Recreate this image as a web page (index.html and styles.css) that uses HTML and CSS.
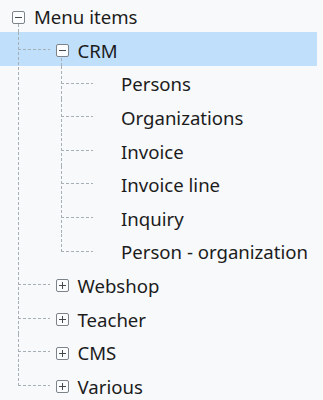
FILE: index.html
```html
<!DOCTYPE html>
<html lang="en">

<head>
    <meta charset="UTF-8">
    <title>Menu items</title>
    <link rel="stylesheet" href="styles.css">
</head>

<body>
    <div class="tree">
        <ul>
            <li class="node open l0">
                <div class="row"><span class="toggle"></span><span class="label">Menu items</span></div>
                <ul>
                    <li class="node open l1">
                        <div class="row selected"><span class="toggle"></span><span class="label">CRM</span></div>
                        <ul>
                            <li class="leaf l2"><div class="row"><span class="spacer"></span><span class="label">Persons</span></div></li>
                            <li class="leaf l2"><div class="row"><span class="spacer"></span><span class="label">Organizations</span></div></li>
                            <li class="leaf l2"><div class="row"><span class="spacer"></span><span class="label">Invoice</span></div></li>
                            <li class="leaf l2"><div class="row"><span class="spacer"></span><span class="label">Invoice line</span></div></li>
                            <li class="leaf l2"><div class="row"><span class="spacer"></span><span class="label">Inquiry</span></div></li>
                            <li class="leaf l2"><div class="row"><span class="spacer"></span><span class="label">Person - organization</span></div></li>
                        </ul>
                    </li>
                    <li class="node l1"><div class="row"><span class="toggle plus"></span><span class="label">Webshop</span></div></li>
                    <li class="node l1"><div class="row"><span class="toggle plus"></span><span class="label">Teacher</span></div></li>
                    <li class="node l1"><div class="row"><span class="toggle plus"></span><span class="label">CMS</span></div></li>
                    <li class="node l1"><div class="row"><span class="toggle plus"></span><span class="label">Various</span></div></li>
                </ul>
            </li>
        </ul>
    </div>
</body>

</html>
```

FILE: styles.css
```css
body {
    margin: 0;
    background-color: #f7f9fb;
    font-family: "Noto Sans", "Open Sans", sans-serif;
    font-size: 18.6px;
    color: #1c1c1c;
}
ul {
    list-style: none;
    margin: 0;
    padding: 0;
}
.tree {
    width: 317px;
    margin-top: -1.6px;
}
.tree li {
    position: relative;
}
.l0 { --lvl: 0; --x: 18px; }
.l1 { --lvl: 1; --x: 61px; }
.l2 { --lvl: 2; }

.row {
    position: relative;
    display: flex;
    align-items: center;
    height: 33.6px;
    box-sizing: border-box;
    padding-top: 3px;
    padding-left: calc(12px + var(--lvl) * 43.5px);
}
.row.selected {
    background-color: #c0dffb;
}
/* tree lines */
.l1::before,
.l2::before {
    content: "";
    position: absolute;
    z-index: 1;
    top: 17px;
    width: 32px;
    height: 1px;
    background: repeating-linear-gradient(to right, #a6aeb6 0 3px, transparent 3px 5px);
}
.l1::before { left: 18px; }
.l2::before { left: 61px; }
.l1::after,
.l2::after {
    content: "";
    position: absolute;
    z-index: 1;
    top: 0;
    bottom: 0;
    width: 1px;
    background: repeating-linear-gradient(to bottom, #a6aeb6 0 3px, transparent 3px 5px);
}
.l1::after { left: 18px; }
.l2::after { left: 61px; }
.l1:last-child::after,
.l2:last-child::after {
    bottom: auto;
    height: 17px;
}
.open > .row::after {
    content: "";
    position: absolute;
    z-index: 1;
    left: var(--x);
    top: 26px;
    bottom: 0;
    width: 1px;
    background: repeating-linear-gradient(to bottom, #a6aeb6 0 3px, transparent 3px 5px);
}
/* toggle icon */
.toggle,
.spacer {
    flex: none;
    width: 13px;
    height: 13px;
    margin-top: 1px;
    margin-right: 9px;
}
.toggle {
    position: relative;
    box-sizing: border-box;
    border: 1px solid #7d838a;
    border-radius: 2px;
    background-color: #fcfdfe;
}
.toggle::before {
    content: "";
    position: absolute;
    left: 2px;
    top: 5px;
    width: 7px;
    height: 1px;
    background-color: #45484d;
}
.toggle.plus::after {
    content: "";
    position: absolute;
    left: 5px;
    top: 2px;
    width: 1px;
    height: 7px;
    background-color: #45484d;
}
.label {
    white-space: nowrap;
}
```
